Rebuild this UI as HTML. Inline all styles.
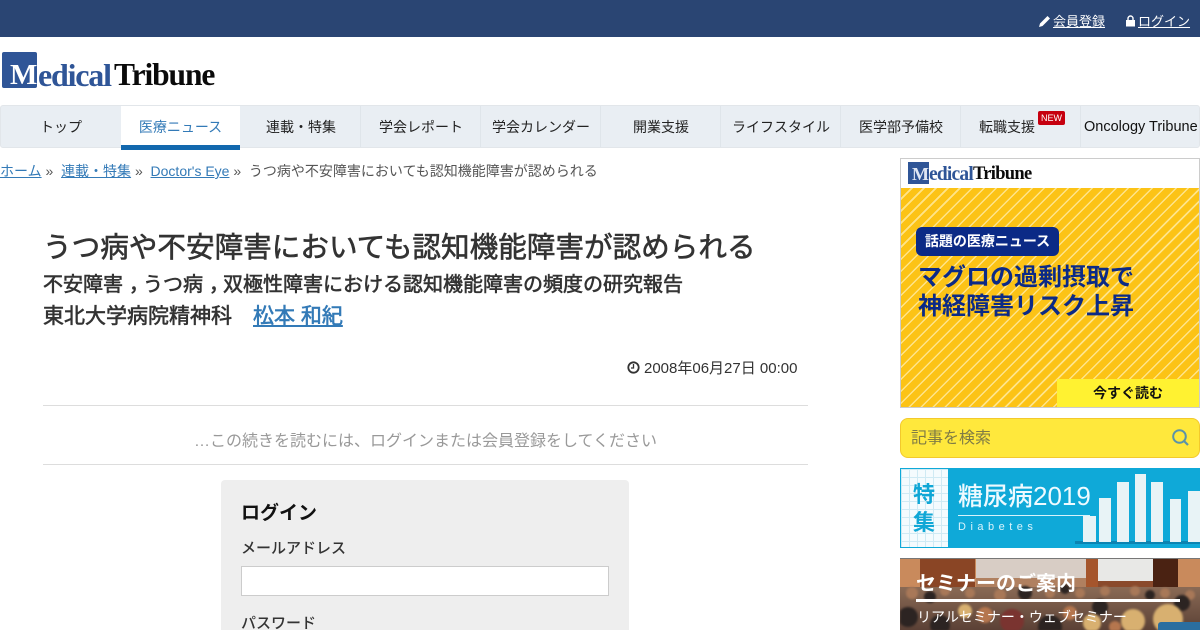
<!DOCTYPE html>
<html lang="ja"><head><meta charset="utf-8"><title>うつ病や不安障害においても認知機能障害が認められる</title>
<style>
*{box-sizing:border-box}
html,body{margin:0;padding:0;width:1200px;height:630px;overflow:hidden;background:#fff}
body{font-family:"Liberation Sans","Noto Sans CJK JP",sans-serif;color:#333;font-size:14px;position:relative}
.a{position:absolute;white-space:nowrap}
a{color:#337ab7;text-decoration:underline}
.nav{position:absolute;top:105px;left:0;width:1200px;height:43px;background:#e9eef3;border:1px solid #e2e6ea;border-radius:3px}
.n{position:absolute;top:106px;height:43px;line-height:43px;text-align:center;font-size:14px;color:#222;width:120px}
.s{position:absolute;top:106px;width:1px;height:41px;background:#dfe5ea}
.logo{font-family:"Liberation Serif",serif;font-weight:bold;white-space:nowrap;position:absolute}
.b{-webkit-text-stroke:.6px currentColor}
.c{position:relative;left:6px}
</style></head><body>
<div class="a" style="left:0;top:0;width:1200px;height:37px;background:#2a4573"></div>
<svg class="a" style="left:1039px;top:16px" width="11" height="11" viewBox="0 0 11 11"><path d="M0 11 L1 7.500 L7.500 1 L8.500 0 L11 2.500 L10 3.500 L3.500 10 Z" fill="#fff"/></svg>
<a class="a" style="left:1053px;top:13px;font-size:13px;line-height:17px;color:#fff">会員登録</a>
<svg class="a" style="left:1126px;top:15px" width="9" height="12" viewBox="0 0 9 12"><path d="M0 5h9v6.500H0z" fill="#fff"/><path d="M2 5.500V3.500a2.500 2.500 0 0 1 5 0v2" fill="none" stroke="#fff" stroke-width="1.400"/></svg>
<a class="a" style="left:1138px;top:13px;font-size:13px;line-height:17px;color:#fff">ログイン</a>

<div class="a" style="left:2px;top:52px;width:35px;height:36px;background:#2f5597;border-radius:2px"></div>
<div class="logo" style="left:10px;top:58px;font-size:29px;line-height:34px;letter-spacing:0;color:#fff">M</div>
<div class="logo" style="left:38px;top:58px;font-size:32px;line-height:34px;letter-spacing:-1.200px;color:#2f5597">edical</div>
<div class="logo" style="left:114px;top:58px;font-size:31.500px;line-height:34px;letter-spacing:-1.100px;color:#0a0a0a">Tribune</div>

<div class="nav"></div>
<div class="s" style="left:360px"></div><div class="s" style="left:480px"></div><div class="s" style="left:600px"></div><div class="s" style="left:720px"></div><div class="s" style="left:840px"></div><div class="s" style="left:960px"></div><div class="s" style="left:1080px"></div>
<div class="n" style="left:1px">トップ</div>
<div class="n" style="left:121px;top:105px;width:119px;background:#fff;color:#337ab7;height:45px;border-top:1px solid #e2e6ea;border-bottom:5px solid #1268ae;line-height:42px">医療ニュース</div>
<div class="n" style="left:241px">連載・特集</div>
<div class="n" style="left:361px">学会レポート</div>
<div class="n" style="left:481px">学会カレンダー</div>
<div class="n" style="left:601px">開業支援</div>
<div class="n" style="left:721px">ライフスタイル</div>
<div class="n" style="left:841px">医学部予備校</div>
<div class="n" style="left:961px;text-align:left;padding-left:18px">転職支援</div>
<div class="a" style="left:1038px;top:111px;width:27px;height:14px;background:#c6000f;border-radius:2px;color:#fff;font-size:9px;line-height:14px;text-align:center">NEW</div>
<div class="a" style="left:1084px;top:106px;font-size:14.500px;line-height:43px;color:#111">Oncology Tribune</div>

<div class="a" style="left:0;top:161px;font-size:14px;line-height:20px;color:#555"><a>ホーム</a> » &nbsp;<a>連載・特集</a> » &nbsp;<a>Doctor's Eye</a> » &nbsp;うつ病や不安障害においても認知機能障害が認められる</div>

<div class="a b" style="left:43px;top:230px;font-size:28.600px;line-height:36px;color:#333">うつ病や不安障害においても認知機能障害が認められる</div>
<div class="a b" style="left:43px;top:271px;font-size:20px;line-height:28px;color:#333">不安障害<span class="c">，</span>うつ病<span class="c">，</span>双極性障害における認知機能障害の頻度の研究報告</div>
<div class="a b" style="left:43px;top:302px;font-size:21px;line-height:30px;color:#333">東北大学病院精神科</div>
<a class="a b" style="left:253px;top:302px;font-size:21px;line-height:30px">松本 和紀</a>
<svg class="a" style="left:627px;top:361px" width="13" height="13" viewBox="0 0 13 13"><circle cx="6.500" cy="6.500" r="5.200" fill="none" stroke="#333" stroke-width="1.800"/><path d="M6.500 3v4H4" fill="none" stroke="#333" stroke-width="1.300"/></svg>
<div class="a" style="left:644px;top:359px;font-size:15px;line-height:20px;color:#333">2008年06月27日 00:00</div>
<div class="a" style="left:43px;top:405px;width:765px;height:1px;background:#ddd"></div>
<div class="a" style="left:43px;top:431px;width:765px;text-align:center;font-size:16px;line-height:22px;color:#999">…この続きを読むには、ログインまたは会員登録をしてください</div>
<div class="a" style="left:43px;top:464px;width:765px;height:1px;background:#ddd"></div>

<div class="a" style="left:221px;top:480px;width:408px;height:160px;background:#eee;border-radius:4px"></div>
<div class="a" style="left:241px;top:501px;font-size:19px;line-height:26px;font-weight:bold;color:#111">ログイン</div>
<div class="a" style="left:241px;top:538px;font-size:15px;line-height:22px;color:#333;font-weight:500">メールアドレス</div>
<div class="a" style="left:241px;top:566px;width:368px;height:30px;background:#fff;border:1px solid #ccc"></div>
<div class="a" style="left:241px;top:613px;font-size:15px;line-height:22px;color:#333;font-weight:500">パスワード</div>

<!-- ad -->
<div class="a" style="left:900px;top:158px;width:300px;height:250px;background:#fff;border:1px solid #ccc;overflow:hidden">
 <div class="a" style="left:0;top:29px;width:298px;height:220px;background:repeating-linear-gradient(135deg,#fcc316 0,#fcc316 7px,#fee48a 7px,#fee48a 8.500px)"></div>
 <div class="a" style="left:7px;top:3px;width:21px;height:22px;background:#2f5597"></div>
 <div class="logo" style="left:11px;top:5px;font-size:18px;line-height:21px;color:#dfe6f3">M</div>
 <div class="logo" style="left:28px;top:5px;font-size:19.500px;line-height:21px;letter-spacing:-.8px;color:#2f5597">edical</div>
 <div class="logo" style="left:72px;top:5px;font-size:18.500px;line-height:21px;letter-spacing:-.7px;color:#0a0a0a">Tribune</div>
 <div class="a" style="left:15px;top:68px;width:143px;height:29px;background:#0b2a86;border-radius:6px;color:#fff;font-weight:bold;font-size:14px;line-height:28px;text-align:center">話題の医療ニュース</div>
 <div class="a" style="left:17px;top:104px;font-size:24px;line-height:29px;font-weight:bold;color:#0b2a86;white-space:nowrap">マグロの過剰摂取で<br>神経障害リスク上昇</div>
 <div class="a" style="left:156px;top:220px;width:142px;height:28px;background:#fff231;color:#111;font-weight:bold;font-size:14px;line-height:28px;text-align:center">今すぐ読む</div>
</div>

<!-- search -->
<div class="a" style="left:900px;top:418px;width:300px;height:40px;background:#ffe83c;border:1px solid #f3c92c;border-radius:8px;font-size:16px;line-height:39px;color:#7f7b45;padding-left:10px">記事を検索</div>
<svg class="a" style="left:1171px;top:428px" width="19" height="19" viewBox="0 0 19 19"><circle cx="8.500" cy="8.500" r="6.300" fill="none" stroke="#5b93a9" stroke-width="2"/><path d="M13 13l4 4" stroke="#5b93a9" stroke-width="2.200"/></svg>

<!-- diabetes -->
<div class="a" style="left:900px;top:468px;width:300px;height:80px;background:#0fa9d8;overflow:hidden">
 <div class="a" style="left:0;top:0;width:48px;height:80px;background-color:#f4fbfe;background-image:linear-gradient(#cfeaf4 1px,transparent 1px),linear-gradient(90deg,#cfeaf4 1px,transparent 1px);background-size:8px 8px;border:1px solid #0fa9d8;border-right:0"></div>
 <div class="a" style="left:13px;top:13px;font-size:22px;line-height:28px;color:#10a7d6;font-weight:bold;white-space:normal;width:24px">特集</div>
 <div class="a" style="left:58px;top:11px;font-size:25px;line-height:34px;color:#eefaff;font-weight:500">糖尿病<span style="font-size:26px">2019</span></div>
 <div class="a" style="left:58px;top:47px;width:132px;height:1px;background:#d6f2fb"></div>
 <div class="a" style="left:58px;top:50px;font-size:11px;line-height:18px;letter-spacing:4.500px;color:#d8f3fc">Diabetes</div>
 <div class="a" style="left:175px;top:73px;width:125px;height:3px;background:#0b84b2"></div>
 <div class="a" style="left:183px;top:48px;width:13px;height:26px;background:#e8f3f6"></div>
 <div class="a" style="left:199px;top:30px;width:12px;height:44px;background:#e8f3f6"></div>
 <div class="a" style="left:217px;top:14px;width:12px;height:60px;background:#e8f3f6"></div>
 <div class="a" style="left:235px;top:6px;width:11px;height:68px;background:#e8f3f6"></div>
 <div class="a" style="left:251px;top:14px;width:12px;height:60px;background:#e8f3f6"></div>
 <div class="a" style="left:270px;top:31px;width:11px;height:43px;background:#e8f3f6"></div>
 <div class="a" style="left:288px;top:23px;width:12px;height:51px;background:#e8f3f6"></div>
</div>

<!-- seminar -->
<div class="a" style="left:900px;top:558px;width:300px;height:72px;background:#8a5a3c;overflow:hidden;border-top:1px solid #777">
 <div class="a" style="left:0;top:0;width:300px;height:40px;background:#c98a5c"></div>
 <div class="a" style="left:20px;top:0;width:55px;height:40px;background:#8a4525"></div>
 <div class="a" style="left:76px;top:0;width:110px;height:19px;background:#d8cdc5"></div>
 <div class="a" style="left:76px;top:19px;width:110px;height:21px;background:#b08060"></div>
 <div class="a" style="left:186px;top:0;width:12px;height:40px;background:#a5552c"></div>
 <div class="a" style="left:198px;top:0;width:55px;height:22px;background:#e8e8e6"></div>
 <div class="a" style="left:198px;top:22px;width:55px;height:18px;background:#8a4a2c"></div>
 <div class="a" style="left:253px;top:0;width:25px;height:40px;background:#4a2212"></div>
 <div class="a" style="left:0;top:28px;width:300px;height:44px;background:linear-gradient(#8a6a55,#5a4035)"></div>
 <svg class="a" style="left:0;top:20px;filter:blur(1px)" width="300" height="52" viewBox="0 0 300 52">
 <g fill="#a87858"><circle cx="12" cy="14" r="6"/><circle cx="45" cy="12" r="5"/><circle cx="100" cy="16" r="6"/><circle cx="150" cy="14" r="5"/><circle cx="205" cy="12" r="5"/><circle cx="235" cy="12" r="5"/><circle cx="265" cy="14" r="5"/><circle cx="290" cy="16" r="5"/><circle cx="180" cy="14" r="5"/><circle cx="70" cy="14" r="5"/></g>
 <g fill="#2c2422"><circle cx="30" cy="18" r="6"/><circle cx="125" cy="14" r="7"/><circle cx="165" cy="10" r="5"/><circle cx="250" cy="16" r="5"/><circle cx="282" cy="24" r="8"/></g>
 <g fill="#d8b070"><circle cx="233" cy="42" r="12"/><circle cx="268" cy="40" r="15"/><circle cx="192" cy="44" r="9"/><circle cx="65" cy="32" r="7"/></g>
 <g fill="#2c2422"><circle cx="8" cy="38" r="10"/><circle cx="40" cy="46" r="10"/><circle cx="150" cy="48" r="12"/><circle cx="200" cy="28" r="8"/></g>
 <g fill="#7a3430"><circle cx="112" cy="42" r="12"/></g>
 <g fill="#b5764e"><circle cx="85" cy="36" r="8"/><circle cx="170" cy="34" r="7"/><circle cx="215" cy="48" r="6"/></g>
 </svg>
 <div class="a" style="left:258px;top:63px;width:42px;height:9px;background:#2a6ea0;border-radius:3px 0 0 0"></div>
 <div class="a" style="left:16px;top:11px;font-size:20px;line-height:28px;font-weight:bold;color:#fff">セミナーのご案内</div>
 <div class="a" style="left:16px;top:40px;width:264px;height:3px;background:#fff"></div>
 <div class="a" style="left:17px;top:47px;font-size:14px;line-height:22px;color:#fff">リアルセミナー・ウェブセミナー</div>
</div>
</body></html>
